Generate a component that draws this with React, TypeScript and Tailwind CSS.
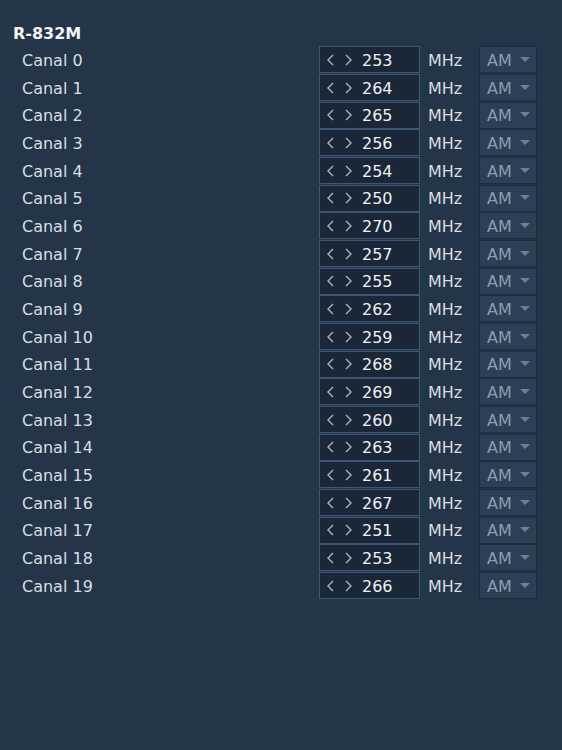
import React from "react";

const values = [253, 264, 265, 256, 254, 250, 270, 257, 255, 262, 259, 268, 269, 260, 263, 261, 267, 251, 253, 266];

function Chevrons() {
  return (
    <svg width="28" height="14" viewBox="0 0 28 14" className="shrink-0">
      <path d="M7 2 L2 7 L7 12" fill="none" stroke="#aab4c0" strokeWidth="1.4" />
      <path d="M20 2 L25 7 L20 12" fill="none" stroke="#aab4c0" strokeWidth="1.4" />
    </svg>
  );
}

export default function App() {
  return (
    <div
      className="w-[562px] h-[750px] bg-[#243549] pl-[13px] pt-[22px]"
      style={{ fontFamily: '"DejaVu Sans", sans-serif' }}
    >
      <div className="h-[24px] leading-[24px] text-[16px] font-bold text-[#f2f4f6]">R-832M</div>
      <div>
        {values.map((v, i) => (
          <div key={i} className="h-[27.68px] flex items-center">
            <div className="w-[306px] pl-[9px] pt-[2px] text-[16px] text-[#d9dee4]">Canal {i}</div>
            <div className="w-[101px] h-[27px] border border-[#3d5673] bg-[#1a2738] flex items-center pl-[6px]">
              <Chevrons />
              <span className="ml-[8px] pt-[2px] text-[16px] text-[#eef1f4]">{v}</span>
            </div>
            <div className="ml-[8px] w-[51px] pt-[2px] text-[16px] text-[#d9dee4]">MHz</div>
            <div className="w-[58px] h-[27px] border border-[#1e2c3d] bg-[#2c3f56] flex items-center pl-[7px]">
              <span className="pt-[2px] text-[16px] text-[#8d9cad]">AM</span>
              <svg width="10" height="6" viewBox="0 0 10 6" className="ml-[8px]">
                <path d="M0 0 L10 0 L5 5 Z" fill="#6e7f92" />
              </svg>
            </div>
          </div>
        ))}
      </div>
    </div>
  );
}
